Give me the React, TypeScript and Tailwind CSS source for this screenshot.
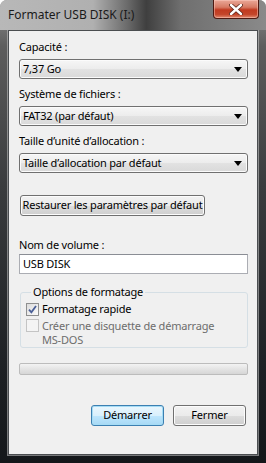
import type { ReactNode } from 'react'

const font = { fontFamily: '"Noto Sans", "Open Sans", sans-serif' }

function Arrow() {
  return (
    <svg width="8" height="5" viewBox="0 0 8 5" className="shrink-0">
      <path d="M0 0 H8 L4 5 Z" fill="#000" />
    </svg>
  )
}

function Combo({ value }: { value: string }) {
  return (
    <div className="mt-[4px] flex h-[20px] w-[229px] items-center justify-between rounded-[3px] border border-[#707070] bg-[linear-gradient(#f6f6f6_0%,#ececec_50%,#e2e2e2_51%,#d9d9d9_100%)] pl-[3px] pr-[5px] shadow-[inset_0_0_0_1px_#fbfbfb]">
      <span className="leading-[16px]">{value}</span>
      <Arrow />
    </div>
  )
}

function Label({ children, mt }: { children: ReactNode; mt: string }) {
  return <div className={`${mt} h-[16px] leading-[16px]`}>{children}</div>
}

function Check({ checked, disabled }: { checked?: boolean; disabled?: boolean }) {
  return (
    <div
      className={`flex h-[13px] w-[13px] shrink-0 items-center justify-center border ${
        disabled
          ? 'border-[#c4c4c4] bg-[#f4f4f4]'
          : 'border-[#8e8f8f] bg-[linear-gradient(135deg,#dcdcdc,#fbfbfb)]'
      }`}
    >
      {checked && (
        <svg width="9" height="9" viewBox="0 0 9 9">
          <path d="M1 4.6 L3.4 7.4 L8 1" fill="none" stroke="#4a5f97" strokeWidth="1.8" />
        </svg>
      )}
    </div>
  )
}

export default function App() {
  return (
    <div className="h-[463px] w-[266px] overflow-hidden bg-white text-[11px] tracking-[-0.2px] text-[#000]" style={font}>
      <div className="flex h-full flex-col rounded-t-[7px] bg-[linear-gradient(#8e8e8e_0%,#5d5d5d_10%,#3a3c3e_40%,#1d2024_80%,#14171a_100%)]">
        {/* Title bar */}
        <div className="relative h-[30px] shrink-0 rounded-t-[7px] bg-[linear-gradient(90deg,#b8b8b8_0%,#b0b0b0_35%,#6a6a6a_48%,#3f3f3f_55%,#6f6f6f_68%,#8a8a8a_100%)]">
          <span className="absolute left-[8px] top-[7px] text-[12px] leading-[16px] tracking-normal text-[#1a1a1a]">Formater USB DISK (I:)</span>
          <div className="absolute right-[7px] top-0 flex h-[19px] w-[46px] items-center justify-center rounded-b-[4px] border border-t-0 border-[#4e1a12] bg-[linear-gradient(#eaa898_0%,#d67a64_40%,#c13a20_55%,#c4452a_80%,#e08a70_100%)] shadow-[inset_0_0_0_1px_rgba(255,210,200,0.45)]">
            <svg width="14" height="11" viewBox="0 0 14 11">
              <path d="M2 1 L12 10 M12 1 L2 10" stroke="#5a2418" strokeWidth="4" strokeLinecap="round" />
              <path d="M2 1 L12 10 M12 1 L2 10" stroke="#fff" strokeWidth="2.4" strokeLinecap="round" />
            </svg>
          </div>
        </div>

        {/* Client area */}
        <div className="mx-[8px] mb-[8px] flex flex-1 flex-col border border-[#4a4d50] bg-[#f0f0f0] pl-[10px] pt-[8px] shadow-[0_0_0_1px_rgba(200,200,200,0.55)]">
          <Label mt="mt-0">Capacité :</Label>
          <Combo value="7,37 Go" />
          <Label mt="mt-[7px]">Système de fichiers :</Label>
          <Combo value="FAT32 (par défaut)" />
          <Label mt="mt-[7px]">Taille d’unité d’allocation :</Label>
          <Combo value="Taille d’allocation par défaut" />

          <button className="ml-[1px] mt-[22px] flex h-[21px] w-[185px] items-center justify-center whitespace-nowrap rounded-[3px] border border-[#707070] bg-[linear-gradient(#f2f2f2_0%,#ebebeb_50%,#dddddd_51%,#cfcfcf_100%)] shadow-[inset_0_0_0_1px_#fcfcfc]">
            Restaurer les paramètres par défaut
          </button>

          <Label mt="mt-[21px]">Nom de volume :</Label>
          <div className="mt-[1px] flex h-[20px] w-[229px] items-center border border-[#abadb3] border-t-[#8a8d94] bg-white pl-[3px]">
            USB DISK
          </div>

          <fieldset className="ml-[1px] mt-[10px] h-[64px] w-[228px] rounded-[3px] border border-[#d5dfe5] pl-[5px]">
            <legend className="ml-[5px] px-[2px] leading-[16px]">Options de formatage</legend>
            <div className="mt-[1px] flex items-center gap-[3px] leading-[16px]">
              <Check checked />
              <span>Formatage rapide</span>
            </div>
            <div className="mt-[2px] flex items-start gap-[3px] text-[#6d6d6d]">
              <Check disabled />
              <span className="leading-[14px]">
                Créer une disquette de démarrage
                <br />
                MS-DOS
              </span>
            </div>
          </fieldset>

          <div className="mt-[15px] h-[12px] w-[229px] rounded-[2px] border border-[#bcbcbc] bg-[linear-gradient(#f3f3f3_0%,#e4e4e4_50%,#d6d6d6_100%)]" />

          <div className="mt-[30px] flex justify-end gap-[9px] pr-[11px]">
            <button className="flex h-[21px] w-[73px] items-center justify-center rounded-[3px] border border-[#3c7fb1] bg-[linear-gradient(#eaf6fd_0%,#d9f0fc_50%,#bee6fd_51%,#a7d9f5_100%)] shadow-[inset_0_0_0_1px_#a5dcf5]">
              Démarrer
            </button>
            <button className="flex h-[21px] w-[73px] items-center justify-center rounded-[3px] border border-[#707070] bg-[linear-gradient(#f2f2f2_0%,#ebebeb_50%,#dddddd_51%,#cfcfcf_100%)] shadow-[inset_0_0_0_1px_#fcfcfc]">
              Fermer
            </button>
          </div>
        </div>
      </div>
    </div>
  )
}
